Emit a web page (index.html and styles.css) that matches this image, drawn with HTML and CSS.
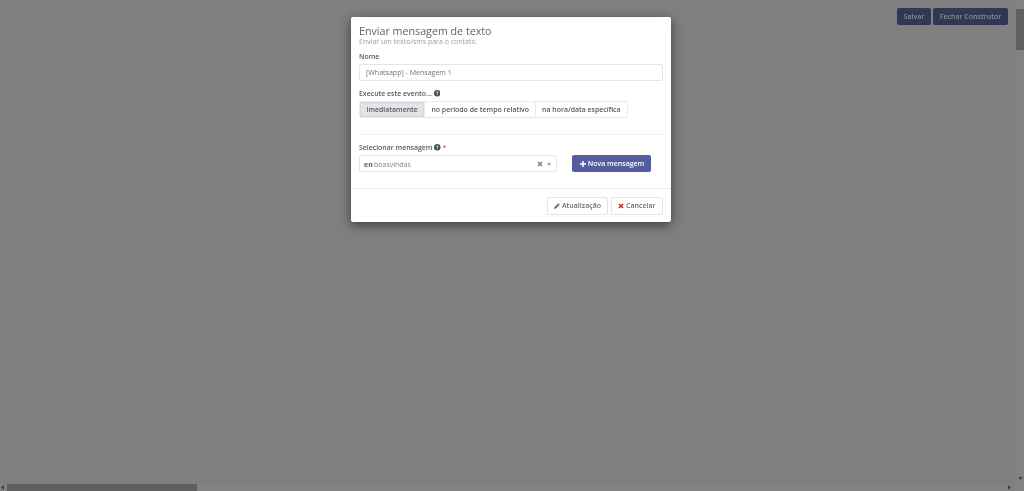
FILE: index.html
```html
<!DOCTYPE html>
<html lang="pt">
<head>
<meta charset="utf-8">
<title>Enviar mensagem de texto</title>
<link rel="stylesheet" href="styles.css">
</head>
<body>
<div class="page">
  <div class="content">
    <div class="toolbar">
      <button class="tool-btn tool-save">Salvar</button>
      <button class="tool-btn tool-close">Fechar Construtor</button>
    </div>
  </div>
  <div class="vscroll">
    <div class="vthumb"></div>
    <svg class="arrow-v" width="5" height="3" viewBox="0 0 6 4"><path d="M0 0h6L3 4z" fill="#3a3a3a"/></svg>
  </div>
  <div class="hscroll">
    <svg class="arrow-h" width="3" height="5" viewBox="0 0 4 6"><path d="M4 0v6L0 3z" fill="#3a3a3a"/></svg>
    <div class="hthumb"></div>
    <svg class="arrow-h2" width="3" height="5" viewBox="0 0 4 6"><path d="M0 0v6l4-3z" fill="#3a3a3a"/></svg>
  </div>
</div>
<div class="backdrop"></div>
<div class="modal">
  <header class="modal-head">
    <h1 class="title">Enviar mensagem de texto</h1>
    <p class="subtitle">Enviar um texto/sms para o contato.</p>
  </header>
  <div class="modal-body">
    <label class="label">Nome</label>
    <div class="input">[Whatsapp] - Mensagem 1</div>
    <div class="label label-event">Execute este evento...
      <svg class="help" viewBox="0 0 16 16"><circle cx="8" cy="8" r="8" fill="#4a4f5c"/><path d="M5.400 6.200c0-1.500 1.100-2.400 2.700-2.400s2.600.9 2.600 2.200c0 1-.6 1.500-1.300 2-.5.4-.7.6-.7 1.200H7c0-1.100.3-1.600 1-2.100.6-.4.9-.7.9-1.200s-.3-.8-.8-.8-.9.3-.9 1.100zM7 10.500h1.800v1.800H7z" fill="#fff"/></svg>
    </div>
    <div class="segments">
      <div class="seg seg-active">imediatamente</div>
      <div class="seg">no período de tempo relativo</div>
      <div class="seg">na hora/data específica</div>
    </div>
    <hr class="rule">
    <div class="label">Selecionar mensagem
      <svg class="help" viewBox="0 0 16 16"><circle cx="8" cy="8" r="8" fill="#4a4f5c"/><path d="M5.400 6.200c0-1.500 1.100-2.400 2.700-2.400s2.600.9 2.600 2.200c0 1-.6 1.500-1.300 2-.5.4-.7.6-.7 1.200H7c0-1.100.3-1.600 1-2.100.6-.4.9-.7.9-1.200s-.3-.8-.8-.8-.9.3-.9 1.100zM7 10.500h1.800v1.800H7z" fill="#fff"/></svg>
      <span class="req">*</span>
    </div>
    <div class="select-row">
      <div class="select">
        <span class="sel-text"><b>en</b> boasvindas</span>
        <svg class="sel-x" width="6" height="6" viewBox="0 0 6 6"><path d="M1 1l4 4M5 1L1 5" stroke="#7a7f8a" stroke-width="1.500"/></svg>
        <svg class="sel-caret" width="4" height="3" viewBox="0 0 5 3"><path d="M0 0h5L2.500 3z" fill="#8a8f99"/></svg>
      </div>
      <button class="primary">
        <svg width="6" height="6" viewBox="0 0 8 8"><path d="M3 0h2v3h3v2H5v3H3V5H0V3h3z" fill="#fff"/></svg>
        <span>Nova mensagem</span>
      </button>
    </div>
  </div>
  <footer class="modal-foot">
    <button class="btn btn-update">
      <svg width="6" height="6" viewBox="0 0 8 8"><path d="M0 8l.5-2.500L5.500.5l2 2-5 5zM6 0l2 2-.3.3-2-2z" fill="#6b7280"/></svg>
      <span>Atualização</span>
    </button>
    <button class="btn btn-cancel">
      <svg width="6" height="6" viewBox="0 0 8 8"><path d="M1.300 1.300l5.400 5.400M6.700 1.300L1.300 6.700" stroke="#e0262b" stroke-width="2.200"/></svg>
      <span>Cancelar</span>
    </button>
  </footer>
</div>
</body>
</html>
```
FILE: styles.css
```css
* { box-sizing: border-box; }
html, body { margin: 0; height: 100%; overflow: hidden; }
body { font-family: "Open Sans", "Liberation Sans", sans-serif; background: #7f7f7f; }
.page {
  width: 1024px; height: 491px;
  display: grid;
  grid-template-columns: 1016px 8px;
  grid-template-rows: 484px 7px;
  filter: blur(.3px);
}
.backdrop {
  position: absolute; inset: 0;
  background: repeating-conic-gradient(rgba(0, 0, 0, .035) 0 25%, rgba(255, 255, 255, .035) 0 50%) 0 0 / 2px 2px;
}
.content { grid-column: 1; grid-row: 1; padding: 8px 8px 0 0; }
.toolbar { display: flex; justify-content: flex-end; gap: 2px; }
.tool-btn {
  height: 17px; padding: 0; border: 0; border-radius: 2px;
  background: #2e3553; color: #8a8c95;
  font: 600 7px "Open Sans", sans-serif;
}
.tool-save { width: 34px; }
.tool-close { width: 75px; }
.vscroll { grid-column: 2; grid-row: 1; position: relative; background: #838383; }
.vthumb { position: absolute; left: 0; right: 0; top: 9px; height: 41px; background: #5e5e5e; }
.arrow-v { position: absolute; left: 2px; bottom: 4px; }
.hscroll { grid-column: 1 / 3; grid-row: 2; position: relative; background: #838383; }
.hthumb { position: absolute; left: 7px; top: 0; bottom: 0; width: 190px; background: #5e5e5e; }
.arrow-h { position: absolute; left: 1px; top: 1px; }
.arrow-h2 { position: absolute; right: 13px; top: 1px; }
.modal {
  position: absolute; left: 351px; top: 17px; width: 320px; height: 205px;
  background: #fff; border-radius: 2px;
  box-shadow: 0 3px 12px rgba(0, 0, 0, .55);
  display: flex; flex-direction: column;
  color: #5f636b;
  filter: blur(.25px);
}
.modal-head { padding: 8px 8px 0; }
.title { margin: 0; font-size: 10.700px; line-height: 13px; font-weight: 400; color: #5f636b; }
.subtitle { margin: 0; font-size: 7px; line-height: 7px; color: #999ca4; }
.modal-body { padding: 7px 8px 0; height: 143px; }
.label { display: block; font-size: 6.950px; line-height: 10px; font-weight: 600; color: #565a62; }
.input {
  margin-top: 2px; height: 17px; padding: 0 6px;
  border: 1px solid #e2e5ea; border-radius: 2px;
  font-size: 7.050px; line-height: 15px; color: #70747c;
}
.label-event { margin-top: 8px; }
.help { width: 6.500px; height: 6.500px; vertical-align: -0.500px; }
.segments { display: flex; width: max-content; margin-top: 2px; border: 1px solid #e8eaee; border-radius: 2px; height: 17px; }
.seg { padding: 0 6px; font-size: 6.950px; line-height: 15px; font-weight: 600; color: #565a62; border-left: 1px solid #e8eaee; }
.seg-active { padding: 0 6.500px; border-left: 0; background: #e3e4e7; box-shadow: inset 0 0 2px rgba(0,0,0,.18); }
.rule { margin: 16px 0 8px; border: 0; border-top: 1px solid #eef0f2; }
.req { color: #e0565a; }
.select-row { display: flex; align-items: center; margin-top: 2px; }
.select {
  width: 197.500px; height: 17px; padding: 1px 1px 0 4px;
  border: 1px solid #e2e5ea; border-radius: 2px;
  display: flex; align-items: center;
  font-size: 7px; color: #80848c;
}
.sel-text { flex: 1; }
.sel-text b { font-weight: 700; color: #565a62; margin-right: -.500px; }
.sel-caret { margin-left: 4px; margin-right: 4px; }
.primary {
  margin-left: 15.500px; width: 79px; height: 17px; padding: 0 0 0 1px; border: 0; border-radius: 2px;
  background: #545da0; color: #fff;
  font: 600 7px "Open Sans", sans-serif;
  display: flex; align-items: center; justify-content: center; gap: 2px;
}
.modal-foot {
  flex: 1; display: flex; justify-content: flex-end; align-items: center; gap: 3px;
  padding: 0 8px; border-top: 1px solid #eceef0;
}
.btn {
  height: 18px; padding: 0 6px; background: #fff;
  border: 1px solid #e2e5ea; border-radius: 2px;
  font: 600 7px "Open Sans", sans-serif; color: #666a73;
  display: flex; align-items: center; gap: 2px;
}
.btn-update { width: 61px; }
.btn-cancel { width: 52px; }
```
